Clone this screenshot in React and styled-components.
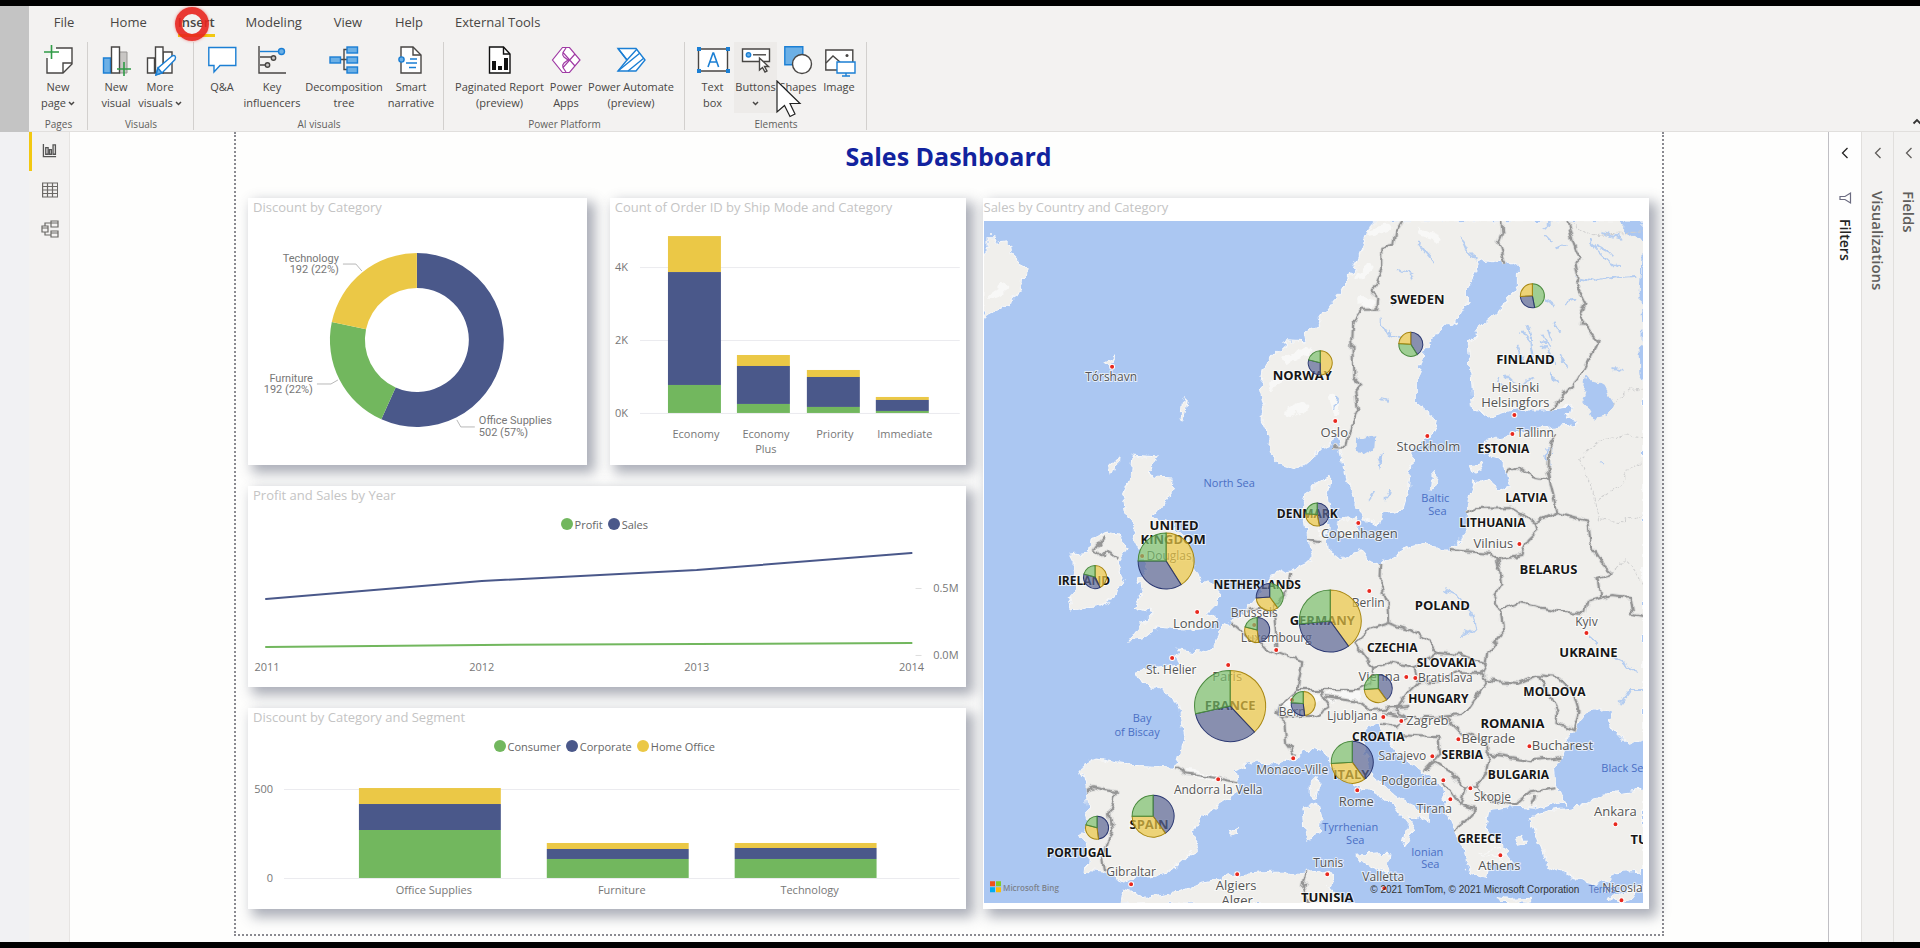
import React from "react";
import styled, { createGlobalStyle, css } from "styled-components";

const GREEN = "#72b75e";
const BLUE = "#4a588a";
const YELLOW = "#ebc846";

const slicePath = (cx, cy, r, from, to, inner = 0) => {
  const point = (radius, t) => {
    const a = t * Math.PI * 2 - Math.PI / 2;
    return `${(cx + radius * Math.cos(a)).toFixed(2)} ${(cy + radius * Math.sin(a)).toFixed(2)}`;
  };
  const large = to - from > 0.5 ? 1 : 0;
  if (!inner) {
    return `M${cx} ${cy}L${point(r, from)}A${r} ${r} 0 ${large} 1 ${point(r, to)}Z`;
  }
  return `M${point(r, from)}A${r} ${r} 0 ${large} 1 ${point(r, to)}L${point(inner, to)}A${inner} ${inner} 0 ${large} 0 ${point(inner, from)}Z`;
};

/* ---------- ribbon icons ---------- */

const line = { fill: "none", stroke: "#484644", strokeWidth: 1.4 };
const accent = { fill: "none", stroke: "#1b7fd4", strokeWidth: 1.4 };

const icons = {
  newPage: (
    <>
      <path d="M12 2h16v16l-9 9H3V12" {...line} fill="#fff" />
      <path d="M28 17h-9v10" {...line} />
      <path d="M7.500 -1v14M0 6h15" stroke="#2f9b46" strokeWidth="1.600" />
    </>
  ),
  newVisual: (
    <>
      <path d="M1.500 12h7v15h-7z" {...accent} fill="#6cb0e6" />
      <path d="M17 6h8v21h-8z" fill="#c8c6c4" stroke="#979593" />
      <path d="M9.500 1h8v26h-8z" {...line} fill="#fff" />
      <path d="M22 16v14M15 23h14" stroke="#2f9b46" strokeWidth="1.600" />
    </>
  ),
  moreVisuals: (
    <>
      <path d="M1.500 12h7v15h-7z" {...line} fill="#fff" />
      <path d="M17 6h9v21h-9z" {...line} fill="#fff" />
      <path d="M9.500 1h7.500v26H9.500z" {...line} fill="#fff" />
      <path d="M10 29l2-7 14-12q2-1 3 0t0 3.500L16 27z" {...accent} fill="#fff" />
      <path d="M12 22l4 5-6 2z" {...accent} fill="#6cb0e6" />
    </>
  ),
  qna: <path d="M.8 1.500h27v18H12l-6 6.500v-6.500H.8z" {...accent} fill="#fff" />,
  influencers: (
    <>
      <path d="M1 0v27h27M2 11h11M2 19h7M18 12h-4" {...line} />
      <path d="M2 5.500h18" {...accent} />
      <circle cx="23.500" cy="5.500" r="3" {...accent} fill="#6cb0e6" />
      <circle cx="15.500" cy="12" r="2.200" {...line} fill="#c8c6c4" />
      <circle cx="9.500" cy="19" r="2.200" {...line} fill="#c8c6c4" />
    </>
  ),
  decomposition: (
    <>
      <path d="M10 13.500h8M18 3.500h-4v20h4" {...line} />
      {[
        [0, 11],
        [17, 1],
        [17, 11],
        [17, 21],
      ].map(([x, y]) => (
        <rect key={`${x}${y}`} x={x} y={y} width="10.500" height="6" {...accent} fill="#6cb0e6" />
      ))}
    </>
  ),
  narrative: (
    <>
      <path d="M4 1h12l8 8v18H4z" {...line} fill="#fff" />
      <path d="M16 1v8h8" {...line} />
      <path d="M13 13h7M9 17h11M12 21.500h7" {...accent} />
      <circle cx="4.500" cy="13.500" r="2.600" {...accent} fill="#6cb0e6" />
    </>
  ),
  paginated: (
    <>
      <path d="M3.500 1h14l6.500 7v19H3.500z" {...line} stroke="#111" fill="#fff" />
      <path d="M17.500 1v7H24" {...line} stroke="#111" />
      <path d="M6 15h4v9H6zM12 20h4v4h-4zM18 12h4v12h-4z" fill="#111" />
    </>
  ),
  powerApps: (
    <g fill="none" stroke="#a03ba5" strokeWidth="1.200">
      <path d="M10.500 1.500h7L28 14 17.500 26.500h-7L.500 14z" fill="#fff" />
      <path d="M14 2l-3 4.500L23 20M14 26l-3-4.500L23 8M11 6.500Q10 9 12 11l4 3-4 3q-2 2-1 4.500" />
    </g>
  ),
  powerAutomate: (
    <g fill="none" stroke="#1b7fd4" strokeWidth="1.400">
      <path d="M1 2.500h18l9 11.500-9 11H1l9-11z" fill="#fff" />
      <path d="M10 14L20 3M1 25L23 7M11 25L27 12M1 2.500L10 14" />
    </g>
  ),
  textBox: (
    <>
      <path d="M-.500 3h29v22h-29z" {...line} fill="#fff" />
      <path d="M9 21l5-14h.6l5 14M10.800 16h7" {...accent} strokeWidth="1.600" />
      {[
        [-2, 1],
        [27, 1],
        [-2, 23],
        [27, 23],
      ].map(([x, y]) => (
        <rect key={`${x}${y}`} x={x} y={y} width="4" height="4" fill="#1b7fd4" />
      ))}
    </>
  ),
  buttons: (
    <>
      <path d="M.500 3h27v12.500H.500z" {...line} fill="#fff" />
      <circle cx="6.500" cy="8.800" r="2.200" {...accent} fill="#6cb0e6" />
      <path d="M11 8.800h13" {...line} />
      <path d="M17.500 12v12l3-2.500 2.500 4.500 2-1-2.500-4.500h4z" {...line} fill="#fff" />
    </>
  ),
  shapes: (
    <>
      <path d="M.800 .800h18v18h-18z" {...accent} fill="#6cb0e6" />
      <circle cx="18" cy="18" r="9.500" {...line} fill="#fff" />
    </>
  ),
  image: (
    <>
      <path d="M.800 4h27v20h-27z" {...line} fill="#fff" />
      <path d="M1 17l7-7 7 6" {...line} />
      <circle cx="22" cy="9.500" r="1.500" fill="#484644" />
      <path d="M12 16h18v11H12zM21 27v3M17 30h8" {...accent} fill="#fff" />
    </>
  ),
};

const ribbon = [
  { name: "Pages", width: 59, items: [{ icon: "newPage", lines: ["New", "page"], menu: true, width: 46 }] },
  {
    name: "Visuals",
    width: 106,
    items: [
      { icon: "newVisual", lines: ["New", "visual"], width: 44 },
      { icon: "moreVisuals", lines: ["More", "visuals"], menu: true, width: 44 },
    ],
  },
  {
    name: "AI visuals",
    width: 250,
    items: [
      { icon: "qna", lines: ["Q&A"], width: 44 },
      { icon: "influencers", lines: ["Key", "influencers"], width: 56 },
      { icon: "decomposition", lines: ["Decomposition", "tree"], width: 88 },
      { icon: "narrative", lines: ["Smart", "narrative"], width: 46 },
    ],
  },
  {
    name: "Power Platform",
    width: 241,
    items: [
      { icon: "paginated", lines: ["Paginated Report", "(preview)"], width: 99 },
      { icon: "powerApps", lines: ["Power", "Apps"], width: 34 },
      { icon: "powerAutomate", lines: ["Power Automate", "(preview)"], width: 96 },
    ],
  },
  {
    name: "Elements",
    width: 182,
    items: [
      { icon: "textBox", lines: ["Text", "box"], width: 43 },
      { icon: "buttons", lines: ["Buttons", ""], menu: true, hot: true, width: 43 },
      { icon: "shapes", lines: ["Shapes"], width: 42 },
      { icon: "image", lines: ["Image"], width: 40 },
    ],
  },
];

const tabs = ["File", "Home", "Insert", "Modeling", "View", "Help", "External Tools"];

const Caret = () => (
  <svg width="7" height="5" viewBox="0 0 7 5" aria-hidden="true">
    <path d="M1 1l2.500 2.500L6 1" fill="none" stroke="#484644" strokeWidth="1.500" />
  </svg>
);

const Ribbon = () => (
  <RibbonRow>
    <Gutter $dark />
    <RibbonBody>
      <Tabs>
        {tabs.map((tab) => (
          <Tab key={tab} type="button" $active={tab === "Insert"}>
            {tab}
            {tab === "Insert" && <ClickMark />}
          </Tab>
        ))}
      </Tabs>
      <Groups>
        {ribbon.map((group) => (
          <Group key={group.name} $width={group.width}>
            <Tools>
              {group.items.map((item) => (
                <Tool key={item.icon} type="button" $width={item.width} $hot={item.hot}>
                  <svg width="28" height="28" viewBox="0 0 28 28" overflow="visible" aria-hidden="true">
                    {icons[item.icon]}
                  </svg>
                  <span>
                    {item.lines.map((text, i) => (
                      <ToolLine key={text}>
                        {text}
                        {item.menu && i === item.lines.length - 1 && <Caret />}
                      </ToolLine>
                    ))}
                  </span>
                  {item.hot && (
                    <Pointer width="26" height="40" viewBox="0 0 26 40" aria-hidden="true">
                      <path d="M1 1v31l7.500-6.500 5.500 11 5-2.500-5-10.500h10z" fill="#fff" stroke="#222" strokeWidth="1.200" />
                    </Pointer>
                  )}
                </Tool>
              ))}
            </Tools>
            <GroupName>{group.name}</GroupName>
          </Group>
        ))}
        <Collapse type="button" aria-label="Collapse ribbon">
          <svg width="10" height="8" viewBox="0 0 10 8">
            <path d="M1.500 6.500L5 3l3.500 3.500" fill="none" stroke="#333" strokeWidth="1.800" />
          </svg>
        </Collapse>
      </Groups>
    </RibbonBody>
  </RibbonRow>
);

const Views = () => (
  <ViewRail>
    <ViewButton type="button" aria-label="Report" $active>
      <svg width="15" height="15" viewBox="0 0 16 16" fill="none" stroke="#555" strokeWidth="1.400">
        <path d="M1.500 1v13.500H15M4 5h2.500v7H4zM8 7h2v5H8zM11.800 2h2.500v10h-2.500z" />
      </svg>
    </ViewButton>
    <ViewButton type="button" aria-label="Data">
      <svg width="16" height="16" viewBox="0 0 16 16" fill="none" stroke="#6b6966" strokeWidth="1.200">
        <path d="M.600 1h15v14H.600zM.600 4.500h15M.600 8h15M.600 11.500h15M5.500 1v14M10.500 1v14" />
      </svg>
    </ViewButton>
    <ViewButton type="button" aria-label="Model">
      <svg width="18" height="18" viewBox="0 0 18 18" fill="none" stroke="#6b6966" strokeWidth="1.200">
        <path d="M1 6h6v6H1zM1 8h6M10 1h7v6h-7zM10 3h7M10 11h7v6h-7zM10 13h7M4 6V3h6M4 12v3h6" />
      </svg>
    </ViewButton>
  </ViewRail>
);

const Panes = () => (
  <>
    <Pane $open $width={33}>
      <PaneToggle name="Filters" />
      <svg width="14" height="14" viewBox="0 0 14 14" aria-hidden="true">
        <path d="M12.500 2v10L7 8.500H2v-3h5z" fill="none" stroke="#6b6b80" strokeWidth="1.200" />
      </svg>
      <PaneName $open>Filters</PaneName>
    </Pane>
    <Pane $width={32}>
      <PaneToggle name="Visualizations" />
      <PaneName>Visualizations</PaneName>
    </Pane>
    <Pane $width={27} $cut>
      <PaneToggle name="Fields" />
      <PaneName>Fields</PaneName>
    </Pane>
  </>
);

const PaneToggle = ({ name }) => (
  <ToggleButton type="button" aria-label={`Expand ${name}`}>
    <svg width="8" height="12" viewBox="0 0 8 12">
      <path d="M6.500 1L1.500 6l5 5" fill="none" stroke="currentColor" strokeWidth="1.300" />
    </svg>
  </ToggleButton>
);

/* ---------- charts ---------- */

const Donut = () => (
  <Chart viewBox="0 0 339 244">
    <path d={slicePath(169, 119, 87, 0, 0.567, 52)} fill={BLUE} />
    <path d={slicePath(169, 119, 87, 0.567, 0.783, 52)} fill={GREEN} />
    <path d={slicePath(169, 119, 87, 0.783, 1, 52)} fill={YELLOW} />
    <g fill="none" stroke="#b8b8b8">
      <path d="M95 43h13l6 7M69 163h14l7-4M209 199l4 7h14" />
    </g>
    <Callout textAnchor="end">
      <tspan x="91" y="41">Technology</tspan>
      <tspan x="91" y="52">192 (22%)</tspan>
    </Callout>
    <Callout textAnchor="end">
      <tspan x="65" y="161">Furniture</tspan>
      <tspan x="65" y="172">192 (22%)</tspan>
    </Callout>
    <Callout>
      <tspan x="231" y="203">Office Supplies</tspan>
      <tspan x="231" y="215">502 (57%)</tspan>
    </Callout>
  </Chart>
);

// each bar: x, then the y of the yellow, blue and green tops
const Stacks = ({ bars, width, base }) =>
  bars.map(([x, top, mid, low]) => (
    <g key={x}>
      <rect x={x} y={top} width={width} height={mid - top} fill={YELLOW} />
      <rect x={x} y={mid} width={width} height={low - mid} fill={BLUE} />
      <rect x={x} y={low} width={width} height={base - low} fill={GREEN} />
    </g>
  ));

const ShipMode = () => (
  <Chart viewBox="0 0 356 244">
    <path d="M30 46.500h320M30 119.500h320M30 192.500h320" stroke="#ebebef" />
    <Stacks
      width={53}
      base={192}
      bars={[
        [58, 15, 51, 164],
        [127, 134, 145, 183],
        [197, 149, 156, 186],
        [266, 176, 179, 190],
      ]}
    />
    <Axis x="5" y="50">4K</Axis>
    <Axis x="5" y="123">2K</Axis>
    <Axis x="5" y="196">0K</Axis>
    <Axis x="86" y="217" textAnchor="middle">Economy</Axis>
    <Axis textAnchor="middle">
      <tspan x="156" y="217">Economy</tspan>
      <tspan x="156" y="232">Plus</tspan>
    </Axis>
    <Axis x="225" y="217" textAnchor="middle">Priority</Axis>
    <Axis x="295" y="217" textAnchor="middle">Immediate</Axis>
  </Chart>
);

const YearLines = () => (
  <Chart viewBox="0 0 718 153">
    <path d="M668 54.500h6M668 121.500h6" stroke="#dedede" />
    <path d="M18 65L234 47L449 36L664 19" fill="none" stroke={BLUE} strokeWidth="2" strokeLinecap="round" />
    <path d="M18 113L234 111L449 110L664 109" fill="none" stroke={GREEN} strokeWidth="2" strokeLinecap="round" />
    {["2011", "2012", "2013", "2014"].map((year, i) => (
      <Axis key={year} x={19 + i * 215} y="137" textAnchor="middle">
        {year}
      </Axis>
    ))}
    <Axis x="711" y="58" textAnchor="end">0.5M</Axis>
    <Axis x="711" y="125" textAnchor="end">0.0M</Axis>
  </Chart>
);

const Segments = () => (
  <Chart viewBox="0 0 718 153">
    <path d="M36 33.500h676M36 122.500h676" stroke="#ebebef" />
    <Stacks
      width={142}
      base={122}
      bars={[
        [111, 32, 48, 74],
        [299, 87, 93, 103],
        [487, 87, 92, 103],
      ]}
    />
    <Axis x="25" y="37" textAnchor="end">500</Axis>
    <Axis x="25" y="126" textAnchor="end">0</Axis>
    <Axis x="186" y="138" textAnchor="middle">Office Supplies</Axis>
    <Axis x="374" y="138" textAnchor="middle">Furniture</Axis>
    <Axis x="562" y="138" textAnchor="middle">Technology</Axis>
  </Chart>
);

const Legend = ({ items }) => (
  <LegendRow>
    {items.map(([name, color]) => (
      <LegendItem key={name} $color={color}>
        {name}
      </LegendItem>
    ))}
  </LegendRow>
);

/* ---------- map ---------- */

const land = [
  // Iceland
  "984 248 988 247 988 236 995 236 998 243 1008 242 1010 253 1020 262 1024 270 1023 285 1015 297 1000 307 984 318",
  // continent
  "1372 221 1367 233 1358 257 1353 270 1342 290 1327 310 1317 325 1303 332 1305 343 1287 342 1273 355 1262 370 1259 390 1263 407 1263 423 1270 437 1268 453 1280 465 1293 469 1310 462 1320 448 1330 445 1335 430 1340 447 1343 462 1347 483 1357 507 1363 520 1378 525 1380 513 1403 510 1408 493 1410 470 1412 450 1435 430 1437 420 1417 403 1417 377 1425 350 1440 330 1457 320 1467 303 1467 287 1480 262 1503 258 1518 267 1518 285 1503 307 1483 325 1468 343 1470 377 1472 407 1487 418 1513 410 1543 410 1570 407 1567 417 1577 423 1543 428 1497 437 1483 443 1480 452 1497 457 1507 472 1510 487 1497 492 1487 480 1473 483 1467 503 1467 527 1462 540 1450 550 1433 550 1428 542 1410 547 1382 563 1367 558 1360 550 1340 560 1327 550 1325 530 1330 510 1327 493 1330 477 1323 480 1305 493 1303 503 1308 542 1313 560 1290 570 1270 575 1257 597 1247 610 1230 622 1218 630 1213 647 1197 653 1175 650 1180 665 1160 667 1137 672 1143 682 1163 690 1173 697 1180 713 1184 737 1180 753 1176 767 1134 765 1097 759 1081 768 1086 787 1088 817 1081 837 1088 850 1086 870 1105 872 1125 882 1138 877 1169 873 1191 853 1198 842 1191 830 1213 808 1240 790 1237 780 1235 770 1257 762 1279 763 1295 758 1310 748 1328 753 1332 767 1354 785 1376 793 1394 807 1407 823 1402 847 1409 837 1413 823 1409 815 1429 823 1429 813 1402 800 1389 790 1376 780 1367 757 1361 737 1367 728 1378 723 1385 737 1398 753 1420 770 1442 787 1446 813 1453 830 1464 847 1466 863 1473 873 1486 877 1490 862 1504 862 1504 847 1486 830 1490 810 1515 807 1534 808 1552 802 1565 805 1556 790 1554 770 1561 757 1570 733 1585 713 1605 708 1612 712 1608 720 1614 729 1627 743 1643 738 1643 221",
  // Turkey
  "1530 818 1552 810 1578 807 1605 793 1643 788 1643 872 1618 873 1596 883 1570 877 1548 867 1539 843",
  // Africa
  "1121 903 1123 890 1147 897 1178 893 1200 883 1235 875 1270 872 1306 872 1328 870 1334 877 1328 887 1341 900 1341 905",
  // Great Britain
  "1132 455 1157 457 1147 470 1153 477 1173 478 1172 490 1162 505 1153 517 1165 520 1187 540 1197 570 1202 583 1218 587 1217 603 1207 613 1217 617 1207 627 1180 630 1157 628 1143 640 1128 642 1143 623 1153 613 1133 607 1143 593 1140 580 1147 567 1140 553 1133 540 1137 527 1127 517 1123 493 1130 477",
  // Ireland
  "1072 555 1090 553 1092 540 1105 532 1120 535 1127 547 1118 560 1122 577 1115 597 1093 607 1072 610 1068 597 1077 585 1072 570",
  // islands
  "1108 466 1118 456 1117 469 1110 474",
  "1181 404 1186 400 1183 420 1180 418",
  "1337 522 1352 517 1358 524 1353 540 1342 536",
  "1318 524 1330 526 1328 535 1320 534",
  "1430 480 1437 472 1434 488 1429 490",
  "1470 466 1482 462 1484 470 1472 474",
  "1310 782 1317 775 1318 790 1315 799 1310 794",
  "1302 811 1317 803 1321 815 1320 835 1308 840 1304 832",
  "1356 855 1389 853 1386 872 1367 864",
  "1228 832 1240 826 1238 834 1231 836",
  "1496 896 1512 899 1530 898 1526 903 1500 902",
  "1608 898 1622 892 1640 886 1632 898 1616 904",
  "1516 838 1521 836 1524 844 1519 845",
  "1104 362 1115 356 1110 366",
  "1480 852 1500 848 1512 862 1494 858",
];

const water = [
  "1587 377 1603 387 1613 403 1605 417 1595 420 1582 397",
  "1617 221 1643 221 1643 244 1630 236",
  "1357 440 1375 434 1374 448 1362 455 1356 448",
  "1377 462 1383 452 1380 470",
  "1544 446 1550 446 1549 466 1544 462",
  "1637 350 1643 345 1643 382 1638 374",
  "1641 255 1643 250 1643 350 1639 300",
];

const lakes =
  "M1415 240l8 10M1421 248l12 14M1460 236l6 14 12 12M1399 270l14 8M1392 305l6 -8M1543 228l8 -5M1545 236l6 6M1588 240l10 12 16 16M1596 246l16 8M1602 232l20 6M1610 262l10 6M1555 250l12 -4M1520 330l10 12 2 14M1528 325l4 16M1540 335l8 12M1548 330l4 12M1518 348l6 16M1536 358l10 6 6 -10M1505 374l10 10M1498 378l6 12M1520 384l14 -6M1549 370l6 14M1560 356l8 12M1566 304l10 -4M1545 300l8 6M1541 344l14 20M1554 322l6 10M1575 278l18 4 20 -4 24 -2M1612 368l10 2M1380 398l8 2M1336 396l-2 14M1390 490l-6 10M1368 500l6 -8M1444 590l14 6 12 14 4 18 -14 8M1588 638l10 8M1612 658l24 12M1643 690h-14l-8 12M1598 462l6 2M1380 320l10 16 12 4";

// snow on the Scandinavian ridge, the Alps and the Pyrenees
const snow =
  "M1372 232l14 -4M1358 276l10 -8M1362 300l8 4M1420 232l16 6M1286 360l20 -8M1270 384l12 -4M1332 398l4 12M1290 412l14 -6M992 296l12 -8M1290 704l26 -6M1326 698l30 -2M1190 772l24 6";

const borders = [
  "1402 221 1395 233 1393 245 1382 247 1382 270 1372 293 1378 298 1377 310 1362 310 1353 323 1352 340 1353 377 1361 385 1355 393 1358 410 1350 427 1345 447 1333 446",
  "1501 221 1502 233 1498 243 1504 263",
  "1567 221 1572 240 1580 260 1575 263 1578 278 1575 283 1585 303 1579 318 1598 342 1577 380 1550 410",
  "1555 435 1548 447 1547 470 1549 480 1557 513",
  "1507 472 1518 467 1532 477 1549 480",
  "1465 513 1477 508 1510 507 1535 523 1557 513 1588 522 1590 543 1602 563 1613 573 1597 578 1600 598 1587 602 1585 613 1563 612 1517 603 1500 610 1493 597 1502 583 1497 560 1522 555 1527 540 1537 530 1535 523",
  "1600 598 1610 595 1630 597 1633 615 1643 617",
  "1449 550 1490 553 1497 560",
  "1500 610 1503 632 1487 653 1485 663",
  "1381 563 1380 583 1387 600 1388 623 1367 630 1355 642 1373 668 1388 662 1413 667 1425 660 1437 653 1427 640 1410 630 1388 623",
  "1437 653 1460 655 1485 663 1480 673 1457 672 1443 680 1417 683 1413 667",
  "1480 673 1487 680 1467 710 1460 715 1438 717 1407 717 1394 710 1407 693 1417 683",
  "1487 680 1517 683 1537 675 1557 677 1573 693 1578 710 1572 730 1556 723 1557 710 1537 675",
  "1373 668 1370 684 1357 690 1330 690 1297 690 1280 705 1277 715 1290 717 1313 717 1330 707 1323 697 1320 690",
  "1323 697 1360 702 1370 710 1407 707",
  "1230 622 1247 637 1270 650 1278 653 1302 662 1297 690",
  "1290 572 1287 593 1273 607 1275 627 1278 653",
  "1247 612 1260 608 1273 612",
  "1307 540 1320 542",
  "1105 537 1095 550 1103 557 1108 552 1117 558",
  "1277 715 1284 718 1286 743 1295 755",
  "1176 767 1187 773 1218 778 1237 782",
  "1086 790 1094 787 1116 792 1110 813 1112 830 1103 857 1105 870",
  "1383 712 1407 717 1398 727 1380 724",
  "1400 735 1438 737 1440 753 1424 770 1435 762 1450 772 1465 787 1477 787 1490 800 1515 805 1530 792 1555 788",
  "1446 717 1462 733 1486 740 1488 757 1486 773 1477 787",
  "1486 753 1530 760 1561 757",
  "1443 780 1450 790 1460 805 1475 810 1464 822 1453 830",
  "1460 805 1465 787",
  "1530 806 1535 795",
  "1306 872 1303 887 1308 903",
];

const regions = [
  "1580 460 1592 490 1598 520 1625 522 1643 512",
  "1578 460 1600 440 1625 436 1643 438",
  "1598 500 1620 484 1628 470 1643 462",
  "1612 405 1628 390 1643 388",
  "1613 573 1625 560 1635 570 1643 586",
  "1570 222 1590 235 1643 232",
];

const countries = [
  ["SWEDEN", 1417, 304], ["NORWAY", 1302, 380], ["FINLAND", 1525, 364], ["ESTONIA", 1503, 453, 12],
  ["LATVIA", 1526, 502, 12], ["LITHUANIA", 1492, 527, 12], ["DENMARK", 1307, 518, 12], ["UNITED", 1174, 530],
  ["KINGDOM", 1173, 544], ["IRELAND", 1084, 585, 12], ["NETHERLANDS", 1257, 589, 12], ["GERMANY", 1322, 625],
  ["POLAND", 1442, 610], ["BELARUS", 1548, 574], ["UKRAINE", 1588, 657], ["CZECHIA", 1392, 652, 12],
  ["SLOVAKIA", 1446, 667, 12], ["HUNGARY", 1438, 703, 12], ["MOLDOVA", 1554, 696, 12], ["FRANCE", 1230, 710],
  ["ROMANIA", 1512, 728], ["CROATIA", 1378, 741, 12], ["SERBIA", 1462, 759, 12], ["BULGARIA", 1518, 779, 12],
  ["ITALY", 1351, 779], ["SPAIN", 1149, 829], ["PORTUGAL", 1079, 857, 12], ["GREECE", 1479, 843, 12],
  ["TUNISIA", 1327, 902], ["TURKEY", 1655, 844],
];

const cities = [
  ["Tórshavn", 1111, 381, 12], ["Oslo", 1334, 437], ["Helsinki", 1515, 392], ["Helsingfors", 1515, 407],
  ["Stockholm", 1428, 451], ["Tallinn", 1535, 437, 12], ["Copenhagen", 1359, 538], ["Vilnius", 1493, 548],
  ["Berlin", 1368, 607, 12], ["Kyiv", 1586, 626, 12], ["Vienna", 1379, 681], ["Bratislava", 1445, 682, 12],
  ["London", 1196, 628], ["Brussels", 1254, 617, 12], ["Luxembourg", 1276, 642, 12], ["St. Helier", 1171, 674, 12],
  ["Paris", 1227, 681], ["Bern", 1292, 716, 12], ["Douglas", 1169, 560, 12], ["Ljubljana", 1352, 720, 12],
  ["Zagreb", 1427, 725], ["Belgrade", 1488, 743], ["Bucharest", 1562, 750], ["Sarajevo", 1402, 760, 12],
  ["Podgorica", 1409, 785, 12], ["Skopje", 1492, 801, 12], ["Tirana", 1434, 813, 12], ["Rome", 1356, 806],
  ["Monaco-Ville", 1292, 774, 12], ["Andorra la Vella", 1218, 794, 12], ["Gibraltar", 1131, 876, 12],
  ["Algiers", 1236, 890], ["Alger", 1237, 905], ["Tunis", 1328, 867, 12], ["Valletta", 1383, 881, 12],
  ["Athens", 1499, 870], ["Ankara", 1615, 816], ["Nicosia", 1622, 892, 12],
];

const seas = [
  ["North Sea", 1229, 487], ["Baltic", 1435, 502], ["Sea", 1437, 515], ["Bay", 1142, 722], ["of Biscay", 1137, 736],
  ["Tyrrhenian", 1350, 831], ["Sea", 1355, 844], ["Ionian", 1427, 856], ["Sea", 1430, 868], ["Black Sea", 1625, 772],
];

const capitals = [
  [1112, 367], [1335, 421], [1514, 415], [1427, 436], [1512, 434], [1358, 523], [1519, 544], [1369, 591],
  [1586, 633], [1406, 677], [1415, 678], [1197, 612], [1254, 625], [1276, 650], [1172, 658], [1228, 665],
  [1292, 700], [1142, 556], [1383, 717], [1401, 721], [1458, 739], [1529, 746], [1432, 756], [1443, 780],
  [1470, 788], [1450, 799], [1357, 790], [1293, 758], [1218, 779], [1131, 884], [1237, 874], [1327, 874],
  [1384, 888], [1500, 855], [1615, 824], [1621, 900],
];

// centre, radius, slice colours clockwise from noon, ends of the first two slices
const pies = [
  [1166, 561, 28, "ybg", 0.41, 0.75],
  [1230, 706, 35.5, "ybg", 0.38, 0.715],
  [1330, 621, 31, "ybg", 0.4, 0.735],
  [1095, 577, 11.5, "ybg", 0.43, 0.79],
  [1269.5, 597, 13.5, "gyb", 0.4, 0.74],
  [1257, 630, 12.5, "byg", 0.48, 0.79],
  [1317, 514.5, 11.5, "byg", 0.47, 0.76],
  [1320, 363, 12, "ybg", 0.5, 0.79],
  [1410.5, 344.5, 12, "bgy", 0.41, 0.76],
  [1532, 296, 12, "gby", 0.47, 0.74],
  [1303, 703.5, 12, "ybg", 0.48, 0.76],
  [1378, 688.5, 14, "byg", 0.4, 0.74],
  [1352, 762, 21, "byg", 0.4, 0.74],
  [1153, 816, 21, "byg", 0.4, 0.75],
  [1097, 827.5, 11.5, "byg", 0.48, 0.79],
];

const pieColors = {
  y: ["#ebc846", "#a88712"],
  b: ["#5b6796", "#2b3872"],
  g: ["#7cc06e", "#4a8a3e"],
};

const closed = (points) => <path key={points} d={`M${points}Z`} />;
const open = (points) => <path key={points} d={`M${points}`} />;

const EuropeMap = () => (
  <MapSheet viewBox="984 221 659 682" preserveAspectRatio="xMidYMid slice">
    <defs>
      <filter id="coast" x="0" y="0" width="1" height="1">
        <feTurbulence type="fractalNoise" baseFrequency="0.09" numOctaves="3" seed="4" />
        <feDisplacementMap in="SourceGraphic" scale="11" xChannelSelector="R" yChannelSelector="G" />
      </filter>
      <filter id="frontier" x="0" y="0" width="1" height="1">
        <feTurbulence type="fractalNoise" baseFrequency="0.09" numOctaves="2" seed="4" />
        <feDisplacementMap in="SourceGraphic" scale="9" xChannelSelector="R" yChannelSelector="G" />
      </filter>
    </defs>
    <g filter="url(#coast)">
      <rect x="970" y="207" width="690" height="710" fill="#abc7f2" />
      <g fill="#f0efec" stroke="#f8f8f8" strokeWidth="1">
        {land.map(closed)}
      </g>
      <path d={snow} fill="none" stroke="#f8f8f7" strokeWidth="8" strokeLinecap="round" />
      <g fill="#abc7f2">{water.map(closed)}</g>
      <path d={lakes} fill="none" stroke="#b5cdf0" strokeWidth="2" />
    </g>
    <g filter="url(#frontier)" fill="none">
      <rect x="970" y="207" width="690" height="710" />
      <g stroke="#dcdcdb" strokeWidth="4" strokeLinejoin="round">
        {borders.map(open)}
      </g>
      <g stroke="#959595" strokeWidth="2" strokeLinejoin="round">
        {borders.map(open)}
      </g>
      <g stroke="#cfcfcf" strokeDasharray="3 2">
        {regions.map(open)}
      </g>
    </g>
    {capitals.map(([x, y]) => (
      <circle key={`${x}-${y}`} cx={x} cy={y} r="2.500" fill="#e8281e" stroke="#fff" />
    ))}
    {seas.map(([name, x, y]) => (
      <MapText key={name + x} x={x} y={y} $kind="sea" $size={11}>
        {name}
      </MapText>
    ))}
    {cities.map(([name, x, y, size]) => (
      <MapText key={name} x={x} y={y} $kind="city" $size={size ? 12 : 13}>
        {name}
      </MapText>
    ))}
    {countries.map(([name, x, y, size]) => (
      <MapText key={name} x={x} y={y} $kind="country" $size={size ? 12 : 13}>
        {name}
      </MapText>
    ))}
    {pies.map(([cx, cy, r, order, a, b]) => {
      const stops = [0, a, b, 1];
      return (
        <g key={`${cx}-${cy}`}>
          {order.split("").map((c, i) => (
            <path
              key={c}
              d={slicePath(cx, cy, r, stops[i], stops[i + 1])}
              fill={pieColors[c][0]}
              fillOpacity="0.7"
              stroke={pieColors[c][1]}
            />
          ))}
        </g>
      );
    })}
    <path d="M990 881h5v5h-5z" fill="#f1511b" />
    <path d="M996 881h5v5h-5z" fill="#80cc28" />
    <path d="M990 887h5v5h-5z" fill="#00adef" />
    <path d="M996 887h5v5h-5z" fill="#fbbc09" />
    <BingText x="1003" y="891">Microsoft Bing</BingText>
    <Credit x="1370" y="893">© 2021 TomTom, © 2021 Microsoft Corporation</Credit>
    <a href="#terms">
      <Credit x="1588" y="893" $link>
        Terms
      </Credit>
    </a>
  </MapSheet>
);

export default function App() {
  return (
    <Screen>
      <GlobalStyle />
      <Ribbon />
      <Workspace>
        <Gutter />
        <Views />
        <Canvas>
          <Page>
            <Heading>Sales Dashboard</Heading>
            <Board>
              <Column>
                <Pair>
                  <Card>
                    <CardTitle>Discount by Category</CardTitle>
                    <Donut />
                  </Card>
                  <Card>
                    <CardTitle>Count of Order ID by Ship Mode and Category</CardTitle>
                    <ShipMode />
                  </Card>
                </Pair>
                <Card>
                  <CardTitle>Profit and Sales by Year</CardTitle>
                  <Legend items={[["Profit", GREEN], ["Sales", BLUE]]} />
                  <YearLines />
                </Card>
                <Card>
                  <CardTitle>Discount by Category and Segment</CardTitle>
                  <Legend items={[["Consumer", GREEN], ["Corporate", BLUE], ["Home Office", YELLOW]]} />
                  <Segments />
                </Card>
              </Column>
              <Card $map>
                <CardTitle $map>Sales by Country and Category</CardTitle>
                <EuropeMap />
              </Card>
            </Board>
          </Page>
        </Canvas>
        <Panes />
      </Workspace>
    </Screen>
  );
}

const GlobalStyle = createGlobalStyle`
  * {
    box-sizing: border-box;
  }
  body {
    margin: 0;
    background-color: #000;
    font-family: "Open Sans", "Noto Sans", sans-serif;
  }
  button {
    font-family: inherit;
    border: none;
    background: none;
    padding: 0;
    color: inherit;
  }
`;

const Screen = styled.div`
  display: flex;
  flex-direction: column;
  min-height: 100vh;
  padding: 6px 0;
  background-color: #000;
  overflow: hidden;
`;

const RibbonRow = styled.header`
  display: flex;
  height: 126px;
`;

const Gutter = styled.div`
  flex: none;
  width: 29px;
  background-color: ${(p) => (p.$dark ? "#c4c4c4" : "#f1f1f3")};
`;

const RibbonBody = styled.div`
  flex: 1;
  min-width: 0;
  display: flex;
  flex-direction: column;
  background-color: #f3f2f1;
  border-bottom: 1px solid #e1dfdd;
  color: #484644;
`;

const Tabs = styled.nav`
  display: flex;
  gap: 31px;
  height: 36px;
  padding: 0 20px;
`;

const Tab = styled.button`
  position: relative;
  min-width: 30px;
  height: 31px;
  font-size: 13px;
  white-space: nowrap;
  ${(p) =>
    p.$active &&
    css`
      font-weight: 600;
      border-bottom: 3px solid #f2c811;
      padding-top: 3px;
    `}
`;

const ClickMark = styled.span`
  position: absolute;
  left: -3px;
  top: 1px;
  width: 34px;
  height: 34px;
  border: 7px solid rgba(232, 36, 30, 0.9);
  border-radius: 50%;
  box-shadow: 0 0 3px rgba(232, 36, 30, 0.5);
`;

const Groups = styled.div`
  flex: 1;
  display: flex;
`;

const Group = styled.section`
  display: flex;
  flex-direction: column;
  justify-content: space-between;
  width: ${(p) => p.$width}px;
  height: 88px;
  padding-left: 6px;
  border-right: 1px solid #d2d0ce;
`;

const Tools = styled.div`
  display: flex;
`;

const Tool = styled.button`
  position: relative;
  display: flex;
  flex-direction: column;
  align-items: center;
  gap: 5px;
  width: ${(p) => p.$width}px;
  height: 71px;
  padding-top: 4px;
  font-size: 11px;
  line-height: 16px;
  background-color: ${(p) => (p.$hot ? "#edebe9" : "transparent")};
`;

const ToolLine = styled.span`
  display: flex;
  align-items: center;
  justify-content: center;
  gap: 2px;
  min-height: 16px;
  white-space: nowrap;
`;

const Pointer = styled.svg`
  position: absolute;
  left: 42px;
  top: 38px;
  z-index: 2;
`;

const GroupName = styled.div`
  font-size: 10px;
  line-height: 12px;
  text-align: center;
  color: #605e5c;
  padding-right: 5px;
`;

const Collapse = styled.button`
  align-self: flex-end;
  margin: 0 -2px 6px auto;
  line-height: 0;
`;

const Workspace = styled.div`
  flex: 1;
  display: flex;
  background-color: #fefefd;
`;

const ViewRail = styled.nav`
  display: flex;
  flex-direction: column;
  width: 41px;
  background-color: #f3f2f1;
  border-right: 1px solid #e6e4e2;
`;

const ViewButton = styled.button`
  display: flex;
  align-items: center;
  justify-content: center;
  height: 39px;
  padding: 0 2px 2px 0;
  border-left: 3px solid ${(p) => (p.$active ? "#f2c811" : "transparent")};
`;

const Canvas = styled.main`
  flex: 1;
  min-width: 0;
  display: flex;
  padding: 0 164px 6px;
`;

const Page = styled.div`
  flex: 1;
  min-width: 0;
  display: flex;
  flex-direction: column;
  padding: 0 13px 25px 12px;
  border: 2px dotted #8a8a90;
  border-top: none;
`;

const Heading = styled.h1`
  margin: 0;
  height: 66px;
  padding-top: 6px;
  font-size: 25px;
  line-height: 36px;
  font-weight: 700;
  text-align: center;
  color: #12239e;
`;

const Board = styled.div`
  flex: 1;
  display: grid;
  grid-template-columns: minmax(0, 717fr) minmax(0, 666fr);
  gap: 17px;
  min-height: 560px;
`;

const Column = styled.div`
  display: grid;
  grid-template-rows: minmax(0, 267fr) minmax(0, 201fr) minmax(0, 201fr);
  gap: 21px;
  min-height: 0;
`;

const Pair = styled.div`
  display: grid;
  grid-template-columns: minmax(0, 339fr) minmax(0, 356fr);
  gap: 23px;
  min-height: 0;
`;

const Card = styled.section`
  display: flex;
  flex-direction: column;
  min-width: 0;
  min-height: 0;
  background-color: #fff;
  box-shadow: 6px 6px 12px 2px rgba(70, 78, 100, 0.45);
  ${(p) =>
    p.$map &&
    css`
      padding: 0 6px 6px 1px;
    `}
`;

const CardTitle = styled.h2`
  flex: none;
  margin: 0;
  padding-left: ${(p) => (p.$map ? 0 : 5)}px;
  height: 23px;
  font-size: 13px;
  line-height: 18px;
  font-weight: 400;
  color: #c4c4c4;
  white-space: nowrap;
`;

const Chart = styled.svg`
  flex: 1 1 0;
  min-height: 0;
  width: 100%;
`;

const Axis = styled.text`
  font-size: 11px;
  fill: #777;
`;

const Callout = styled.text`
  font-family: Roboto, sans-serif;
  font-size: 11px;
  fill: #777;
`;

const LegendRow = styled.div`
  flex: none;
  display: flex;
  justify-content: center;
  gap: 5px;
  height: 25px;
  padding: 5px 5px 0 0;
`;

const LegendItem = styled.span`
  display: flex;
  align-items: center;
  gap: 2px;
  font-size: 11px;
  color: #666;

  &::before {
    content: "";
    width: 12px;
    height: 12px;
    border-radius: 50%;
    background-color: ${(p) => p.$color};
  }
`;

const MapSheet = styled.svg`
  flex: 1 1 0;
  min-height: 0;
  width: 100%;
`;

const mapKinds = {
  country: css`
    font-weight: 700;
    fill: #161616;
  `,
  city: css`
    fill: #555;
  `,
  sea: css`
    fill: #4a6fc4;
    stroke: none;
  `,
};

const MapText = styled.text`
  font-size: ${(p) => p.$size}px;
  text-anchor: middle;
  paint-order: stroke;
  stroke: rgba(255, 255, 255, 0.7);
  stroke-width: 2px;
  ${(p) => mapKinds[p.$kind]}
`;

const BingText = styled.text`
  font-size: 8px;
  font-weight: 600;
  fill: #7c828c;
`;

const Credit = styled.text`
  font-family: "Liberation Sans", Arial, sans-serif;
  font-size: 10px;
  fill: ${(p) => (p.$link ? "#5a78c0" : "#333")};
`;

const Pane = styled.aside`
  flex: none;
  display: flex;
  flex-direction: column;
  align-items: center;
  gap: 14px;
  width: ${(p) => p.$width}px;
  padding-top: 15px;
  padding-left: ${(p) => (p.$cut ? 4 : 0)}px;
  overflow: hidden;
  color: ${(p) => (p.$open ? "#252423" : "#605e5c")};
  background-color: ${(p) => (p.$open ? "#fefefe" : "#f3f2f1")};
  border-left: 1px solid ${(p) => (p.$open ? "#c0bfc4" : "#e1dfdd")};
`;

const ToggleButton = styled.button`
  line-height: 0;
  margin-bottom: 18px;
`;

const PaneName = styled.span`
  writing-mode: vertical-rl;
  font-size: ${(p) => (p.$open ? 14 : 15)}px;
  line-height: 18px;
  font-weight: 600;
`;
